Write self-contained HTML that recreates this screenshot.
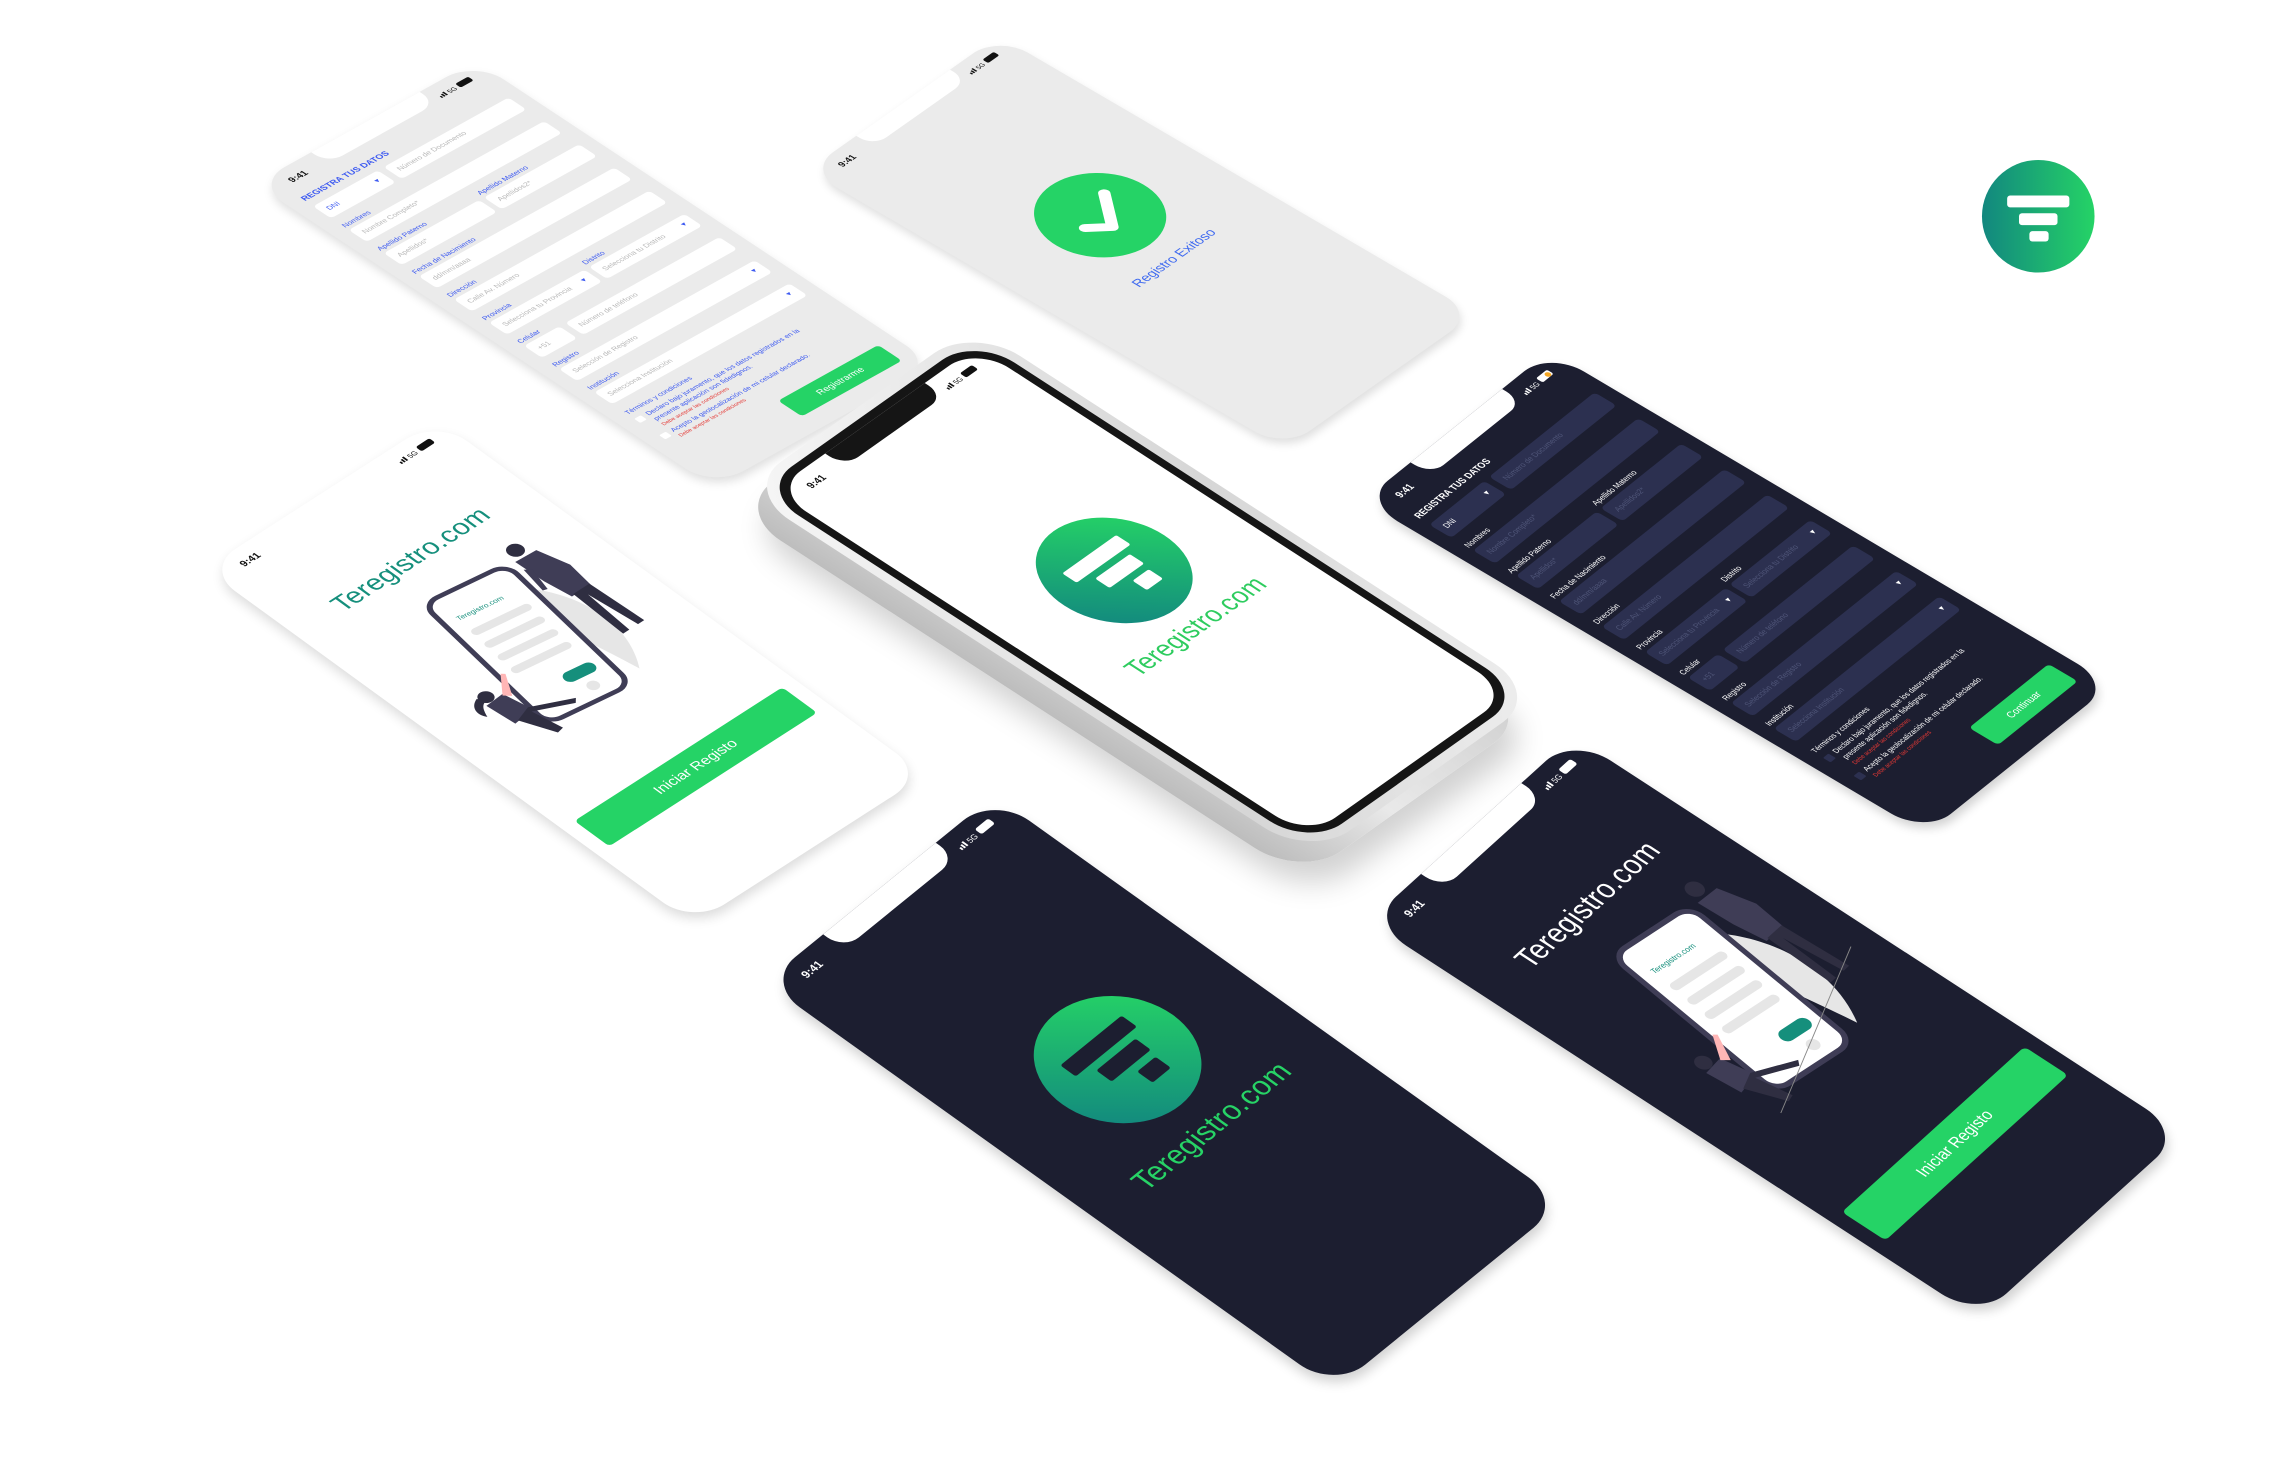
<!DOCTYPE html>
<html><head><meta charset="utf-8">
<style>
html,body{margin:0;padding:0;background:#fff;width:2296px;height:1472px;overflow:hidden}
#w{position:absolute;left:0;top:0;width:1550px;height:994px;transform:scale(1.48129);transform-origin:0 0}
.scr{position:absolute;left:0;top:0;width:375px;height:812px;transform-origin:0 0;border-radius:50px;overflow:hidden;font-family:"Liberation Sans",sans-serif}
.lt{background:#ebebeb;box-shadow:-6px 8px 14px rgba(0,0,0,.13)}
.wh{background:#fff;box-shadow:-6px 8px 16px rgba(0,0,0,.14)}
.dk{background:#1c1e30;box-shadow:-6px 8px 14px rgba(0,0,0,.18)}
.notch{position:absolute;left:96px;top:-4px;width:184px;height:34px;background:#fff;border-radius:0 0 24px 24px}
.tm{position:absolute;left:36px;top:16px;font-size:14px;font-weight:bold;color:#111}
.dk .tm{color:#fff}
.ic{position:absolute;left:292px;top:15px}
.lb{position:absolute;font-size:11px;color:#3d5af1}
.dk .lb{color:#fff}
.in{position:absolute;height:32px;background:#fff;border-radius:6px;font-size:11px;color:#b8b8b8;line-height:32px;padding-left:10px;box-sizing:border-box}
.dk .in{background:#2c3050;color:#4f5578}
.dd{position:absolute;right:10px;top:0;color:#3d5af1;font-size:10px}
.dk .dd{color:#fff}
.title{position:absolute;left:22px;top:54px;font-size:13px;font-weight:bold;color:#3d5af1}
.dk .title{color:#fff}
.tx{position:absolute;left:40px;font-size:10.5px;color:#3d5af1;white-space:nowrap}
.dk .tx{color:#fff}
.red{color:#e53935!important;font-size:8.5px}
.cb{position:absolute;left:22px;width:11px;height:11px;background:#fff;border-radius:2px}
.dk .cb{background:#2c3050}
.btn{position:absolute;background:#25d366;color:#fff;border-radius:6px;text-align:center}
.logo{position:absolute;border-radius:50%;background:linear-gradient(45deg,#12877f 10%,#25d366 90%)}
.brand{position:absolute;left:0;width:375px;text-align:center;font-size:36px;letter-spacing:.3px}
</style></head><body>
<div id="w">

<!-- A light form -->
<div class="scr lt" style="transform:matrix(.3973,-.2213,.3818,.2525,172,124)">
 <div class="notch"></div><div class="tm">9:41</div>
 <div class="ic"><svg width="60" height="14"><rect x="0" y="8" width="2.5" height="4" fill="#111"/><rect x="4" y="6" width="2.5" height="6" fill="#111"/><rect x="8" y="4" width="2.5" height="8" fill="#111"/><text x="14" y="12" font-size="10" font-family="Liberation Sans" fill="#111">5G</text><rect x="32" y="2" width="22" height="10" rx="3" fill="#111"/></svg></div>
 <div class="title">REGISTRA TUS DATOS</div>
 <div class="in" style="left:22px;top:80px;width:110px;color:#3d5af1">DNI<span class="dd">▼</span></div>
 <div class="in" style="left:142px;top:80px;width:212px">Número de Documento</div>
 <div class="lb" style="left:22px;top:128px">Nombres</div>
 <div class="in" style="left:22px;top:143px;width:332px">Nombre Completo*</div>
 <div class="lb" style="left:22px;top:190px">Apellido Paterno</div><div class="lb" style="left:192px;top:190px">Apellido Materno</div>
 <div class="in" style="left:22px;top:205px;width:162px">Apellidos*</div><div class="in" style="left:192px;top:205px;width:162px">Apellidos2*</div>
 <div class="lb" style="left:22px;top:252px">Fecha de Nacimiento</div>
 <div class="in" style="left:22px;top:267px;width:332px">dd/mm/aaaa</div>
 <div class="lb" style="left:22px;top:314px">Dirección</div>
 <div class="in" style="left:22px;top:329px;width:332px">Calle Av. Número</div>
 <div class="lb" style="left:22px;top:376px">Provincia</div><div class="lb" style="left:192px;top:376px">Distrito</div>
 <div class="in" style="left:22px;top:391px;width:162px">Selecciona tu Provincia<span class="dd">▼</span></div><div class="in" style="left:192px;top:391px;width:162px">Selecciona tu Distrito<span class="dd">▼</span></div>
 <div class="lb" style="left:22px;top:438px">Celular</div>
 <div class="in" style="left:22px;top:453px;width:60px">+51</div><div class="in" style="left:92px;top:453px;width:262px">Número de teléfono</div>
 <div class="lb" style="left:22px;top:500px">Registro</div>
 <div class="in" style="left:22px;top:515px;width:332px">Selección de Registro<span class="dd">▼</span></div>
 <div class="lb" style="left:22px;top:562px">Institución</div>
 <div class="in" style="left:22px;top:577px;width:332px">Selecciona Institución<span class="dd">▼</span></div>
 <div class="tx" style="top:628px;left:22px">Términos y condiciones</div>
 <div class="cb" style="top:648px"></div>
 <div class="tx" style="top:646px">Declaro bajo juramento, que los datos registrados en la</div>
 <div class="tx" style="top:660px">presente aplicación son fidedignos.</div>
 <div class="tx red" style="top:674px">Debe aceptar las condiciones</div>
 <div class="cb" style="top:692px"></div>
 <div class="tx" style="top:690px">Acepto la geolocalización de mi celular declarado.</div>
 <div class="tx red" style="top:704px">Debe aceptar las condiciones</div>
 <div class="btn" style="left:180px;top:738px;width:170px;height:42px;line-height:42px;font-size:14px">Registrarme</div>
</div>

<!-- B success -->
<div class="scr lt" style="transform:matrix(.344,-.2427,.3965,.2315,545,115)">
 <div class="notch"></div><div class="tm">9:41</div>
 <div class="ic"><svg width="60" height="14"><rect x="0" y="8" width="2.5" height="4" fill="#111"/><rect x="4" y="6" width="2.5" height="6" fill="#111"/><rect x="8" y="4" width="2.5" height="8" fill="#111"/><text x="14" y="12" font-size="10" font-family="Liberation Sans" fill="#111">5G</text><rect x="32" y="2" width="22" height="10" rx="3" fill="#111"/></svg></div>
 <div style="position:absolute;left:107px;top:247px;width:170px;height:170px;border-radius:50%;background:#25d366"></div>
 <svg style="position:absolute;left:107px;top:247px" width="170" height="170"><path d="M52 88 L78 112 L122 60" fill="none" stroke="#fff" stroke-width="16" stroke-linecap="round" stroke-linejoin="round"/></svg>
 <div style="position:absolute;left:0;width:385px;top:446px;text-align:center;color:#3f6af0;font-size:21px">Registro Exitoso</div>
</div>

<!-- C white splash illus -->
<div class="scr wh" style="transform:matrix(.4187,-.2693,.4064,.2956,138,384)">
 <div class="notch"></div><div class="tm">9:41</div>
 <div class="ic"><svg width="60" height="14"><rect x="0" y="8" width="2.5" height="4" fill="#111"/><rect x="4" y="6" width="2.5" height="6" fill="#111"/><rect x="8" y="4" width="2.5" height="8" fill="#111"/><text x="14" y="12" font-size="10" font-family="Liberation Sans" fill="#111">5G</text><rect x="32" y="2" width="22" height="10" rx="3" fill="#111"/></svg></div>
 <div class="brand" style="top:128px;color:#158f7c">Teregistro.com</div>
 <svg style="position:absolute;left:50px;top:190px" width="300" height="300" viewBox="0 0 300 300">
  <path d="M190 70 C240 120 255 200 205 270 C195 200 175 140 190 70Z" fill="#e6e6e6"/>
  <g transform="rotate(8 135 150)">
   <rect x="78" y="30" width="120" height="245" rx="20" fill="#fff" stroke="#3f3d56" stroke-width="7"/>
   <text x="96" y="76" font-size="10" font-family="Liberation Sans" fill="#158f7c">Teregistro.com</text>
   <rect x="96" y="96" width="84" height="12" rx="6" fill="#e6e6e6"/>
   <rect x="96" y="122" width="84" height="12" rx="6" fill="#e6e6e6"/>
   <rect x="96" y="148" width="84" height="12" rx="6" fill="#e6e6e6"/>
   <rect x="96" y="174" width="84" height="12" rx="6" fill="#e6e6e6"/>
   <rect x="138" y="216" width="44" height="18" rx="9" fill="#158f7c"/>
   <circle cx="160" cy="252" r="8" fill="#e6e6e6"/>
  </g>
  <circle cx="238" cy="30" r="11" fill="#2f2e41"/>
  <path d="M224 44 L256 46 L268 90 L262 130 L232 130 L226 90Z" fill="#3f3d56"/>
  <path d="M236 128 L232 215 L242 215 L248 140 L256 215 L266 215 L262 128Z" fill="#2f2e41"/>
  <path d="M222 60 L214 100 L220 102 L230 66Z" fill="#3f3d56"/>
  <circle cx="40" cy="185" r="10" fill="#2f2e41"/>
  <path d="M30 180 C15 185 10 200 18 210 C22 200 26 192 34 190Z" fill="#2f2e41"/>
  <path d="M30 196 L58 194 L66 236 L34 240Z" fill="#3f3d56"/>
  <path d="M40 238 L60 284 L70 282 L62 238 L110 262 L116 256 L64 230Z" fill="#2f2e41"/>
  <path d="M56 196 L80 168 L84 172 L64 204Z" fill="#ffb6b6"/>
 </svg>
 <div class="btn" style="left:20px;top:594px;width:335px;height:58px;line-height:58px;font-size:20px">Iniciar Registo</div>
</div>

<!-- E dark form -->
<div class="scr dk" style="transform:matrix(.336,-.2693,.468,.2771,920,338)">
 <div class="notch"></div><div class="tm">9:41</div>
 <div class="ic"><svg width="60" height="14"><rect x="0" y="8" width="2.5" height="4" fill="#fff"/><rect x="4" y="6" width="2.5" height="6" fill="#fff"/><rect x="8" y="4" width="2.5" height="8" fill="#fff"/><text x="14" y="12" font-size="10" font-family="Liberation Sans" fill="#fff">5G</text><rect x="32" y="2" width="22" height="10" rx="3" fill="#fff"/><circle cx="48" cy="8" r="4" fill="#f5a623"/></svg></div>
 <div class="title">REGISTRA TUS DATOS</div>
 <div class="in" style="left:22px;top:80px;width:110px;color:#fff">DNI<span class="dd">▼</span></div>
 <div class="in" style="left:142px;top:80px;width:212px">Número de Documento</div>
 <div class="lb" style="left:22px;top:128px">Nombres</div>
 <div class="in" style="left:22px;top:143px;width:332px">Nombre Completo*</div>
 <div class="lb" style="left:22px;top:190px">Apellido Paterno</div><div class="lb" style="left:192px;top:190px">Apellido Materno</div>
 <div class="in" style="left:22px;top:205px;width:162px">Apellidos*</div><div class="in" style="left:192px;top:205px;width:162px">Apellidos2*</div>
 <div class="lb" style="left:22px;top:252px">Fecha de Nacimiento</div>
 <div class="in" style="left:22px;top:267px;width:332px">dd/mm/aaaa</div>
 <div class="lb" style="left:22px;top:314px">Dirección</div>
 <div class="in" style="left:22px;top:329px;width:332px">Calle Av. Número</div>
 <div class="lb" style="left:22px;top:376px">Provincia</div><div class="lb" style="left:192px;top:376px">Distrito</div>
 <div class="in" style="left:22px;top:391px;width:162px">Selecciona tu Provincia<span class="dd">▼</span></div><div class="in" style="left:192px;top:391px;width:162px">Selecciona tu Distrito<span class="dd">▼</span></div>
 <div class="lb" style="left:22px;top:438px">Celular</div>
 <div class="in" style="left:22px;top:453px;width:60px">+51</div><div class="in" style="left:92px;top:453px;width:262px">Número de teléfono</div>
 <div class="lb" style="left:22px;top:500px">Registro</div>
 <div class="in" style="left:22px;top:515px;width:332px">Selección de Registro<span class="dd">▼</span></div>
 <div class="lb" style="left:22px;top:562px">Institución</div>
 <div class="in" style="left:22px;top:577px;width:332px">Selecciona Institución<span class="dd">▼</span></div>
 <div class="tx" style="top:628px;left:22px">Términos y condiciones</div>
 <div class="cb" style="top:648px"></div>
 <div class="tx" style="top:646px">Declaro bajo juramento, que los datos registrados en la</div>
 <div class="tx" style="top:660px">presente aplicación son fidedignos.</div>
 <div class="tx red" style="top:674px">Debe aceptar las condiciones</div>
 <div class="cb" style="top:692px"></div>
 <div class="tx" style="top:690px">Acepto la geolocalización de mi celular declarado.</div>
 <div class="tx red" style="top:704px">Debe aceptar las condiciones</div>
 <div class="btn" style="left:190px;top:738px;width:160px;height:42px;line-height:42px;font-size:14px">Continuar</div>
</div>

<!-- F dark splash -->
<div class="scr dk" style="transform:matrix(.4133,-.336,.4741,.3387,516,663)">
 <div class="notch"></div><div class="tm">9:41</div>
 <div class="ic"><svg width="60" height="14"><rect x="0" y="8" width="2.5" height="4" fill="#fff"/><rect x="4" y="6" width="2.5" height="6" fill="#fff"/><rect x="8" y="4" width="2.5" height="8" fill="#fff"/><text x="14" y="12" font-size="10" font-family="Liberation Sans" fill="#fff">5G</text><rect x="32" y="2" width="22" height="10" rx="3" fill="#fff"/></svg></div>
 <div class="logo" style="left:97px;top:250px;width:180px;height:180px"></div>
 <svg style="position:absolute;left:97px;top:250px" width="180" height="180"><rect x="40" y="52" width="100" height="22" rx="3" fill="#1c1e30"/><rect x="62" y="84" width="64" height="22" rx="3" fill="#1c1e30"/><rect x="92" y="116" width="30" height="22" rx="3" fill="#1c1e30"/></svg>
 <div class="brand" style="top:452px;color:#27d366">Teregistro.com</div>
</div>

<!-- G dark illus -->
<div class="scr dk" style="transform:matrix(.368,-.3333,.5074,.33,924,622)">
 <div class="notch"></div><div class="tm">9:41</div>
 <div class="ic"><svg width="60" height="14"><rect x="0" y="8" width="2.5" height="4" fill="#fff"/><rect x="4" y="6" width="2.5" height="6" fill="#fff"/><rect x="8" y="4" width="2.5" height="8" fill="#fff"/><text x="14" y="12" font-size="10" font-family="Liberation Sans" fill="#fff">5G</text><rect x="32" y="2" width="22" height="10" rx="3" fill="#fff"/></svg></div>
 <div class="brand" style="top:134px;color:#fff">Teregistro.com</div>
 <svg style="position:absolute;left:50px;top:195px" width="300" height="300" viewBox="0 0 300 300">
  <path d="M190 70 C240 120 255 200 205 270 C195 200 175 140 190 70Z" fill="#e6e6e6"/>
  <g transform="rotate(8 135 150)">
   <rect x="78" y="30" width="120" height="245" rx="20" fill="#fff" stroke="#3f3d56" stroke-width="7"/>
   <text x="96" y="76" font-size="10" font-family="Liberation Sans" fill="#158f7c">Teregistro.com</text>
   <rect x="96" y="96" width="84" height="12" rx="6" fill="#e6e6e6"/>
   <rect x="96" y="122" width="84" height="12" rx="6" fill="#e6e6e6"/>
   <rect x="96" y="148" width="84" height="12" rx="6" fill="#e6e6e6"/>
   <rect x="96" y="174" width="84" height="12" rx="6" fill="#e6e6e6"/>
   <rect x="138" y="216" width="44" height="18" rx="9" fill="#158f7c"/>
   <circle cx="160" cy="252" r="8" fill="#e6e6e6"/>
  </g>
  <circle cx="238" cy="30" r="11" fill="#2f2e41"/>
  <path d="M224 44 L256 46 L268 90 L262 130 L232 130 L226 90Z" fill="#3f3d56"/>
  <path d="M236 128 L232 215 L242 215 L248 140 L256 215 L266 215 L262 128Z" fill="#2f2e41"/>
  <circle cx="40" cy="185" r="10" fill="#2f2e41"/>
  <path d="M30 196 L58 194 L66 236 L34 240Z" fill="#3f3d56"/>
  <path d="M40 238 L60 284 L70 282 L62 238 L110 262 L116 256 L64 230Z" fill="#2f2e41"/>
  <path d="M56 196 L80 168 L84 172 L64 204Z" fill="#ffb6b6"/>
  <line x1="40" y1="288" x2="290" y2="200" stroke="#888" stroke-width="1"/>
 </svg>
 <div class="btn" style="left:20px;top:615px;width:335px;height:58px;line-height:58px;font-size:20px">Iniciar Registo</div>
</div>

<!-- D real phone -->
<div style="position:absolute;left:0;top:0;width:375px;height:812px;transform-origin:0 0;transform:translate(-6px,14px) matrix(.3653,-.2587,.4446,.2882,522,331)">
 <div style="position:absolute;left:-26px;top:-26px;width:427px;height:864px;border-radius:72px;background:linear-gradient(90deg,#bdbdbd,#e9e9e9 40%,#d0d0d0);box-shadow:-20px 30px 40px rgba(0,0,0,.18)"></div>
</div>
<div style="position:absolute;left:0;top:0;width:375px;height:812px;transform-origin:0 0;transform:matrix(.3653,-.2587,.4446,.2882,522,331)">
 <div style="position:absolute;left:-26px;top:-26px;width:427px;height:864px;border-radius:72px;background:linear-gradient(135deg,#f7f7f7,#d6d6d6 60%,#eeeeee)"></div>
 <div style="position:absolute;left:-12px;top:-12px;width:399px;height:836px;border-radius:60px;background:#151515"></div>
</div>
<div class="scr" style="background:#fff;transform:matrix(.3653,-.2587,.4446,.2882,522,331)">
 <div class="notch" style="background:#151515"></div><div class="tm">9:41</div>
 <div class="ic"><svg width="60" height="14"><rect x="0" y="8" width="2.5" height="4" fill="#111"/><rect x="4" y="6" width="2.5" height="6" fill="#111"/><rect x="8" y="4" width="2.5" height="8" fill="#111"/><text x="14" y="12" font-size="10" font-family="Liberation Sans" fill="#111">5G</text><rect x="32" y="2" width="22" height="10" rx="3" fill="#111"/></svg></div>
 <div class="logo" style="left:100px;top:268px;width:184px;height:184px"></div>
 <svg style="position:absolute;left:100px;top:268px" width="184" height="184"><rect x="42" y="54" width="100" height="22" rx="3" fill="#fff"/><rect x="64" y="86" width="64" height="22" rx="3" fill="#fff"/><rect x="94" y="118" width="30" height="22" rx="3" fill="#fff"/></svg>
 <div class="brand" style="top:466px;color:#2ecc5f">Teregistro.com</div>
</div>

<!-- top-right icon -->
<div style="position:absolute;left:1338px;top:108px;width:76px;height:76px;border-radius:50%;background:linear-gradient(90deg,#12877f,#25d366)"></div>
<div style="position:absolute;left:1355px;top:132px;width:42px;height:8px;border-radius:2px;background:#fff"></div>
<div style="position:absolute;left:1363px;top:144px;width:26px;height:8px;border-radius:2px;background:#fff"></div>
<div style="position:absolute;left:1370px;top:156px;width:13px;height:7px;border-radius:2px;background:#fff"></div>

</div>
</body></html>
